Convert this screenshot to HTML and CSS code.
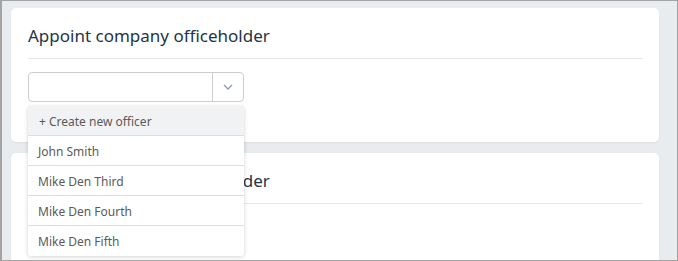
FILE: index.html
```html
<!DOCTYPE html>
<html lang="en">

<head>
    <meta charset="UTF-8">
    <meta name="viewport" content="width=device-width, initial-scale=1.0">
    <title>Appoint company officeholder</title>
    <link rel="stylesheet" href="styles.css">
</head>

<body>

    <div class="page">
        <div class="card">
            <h2 class="card-title">Appoint company officeholder</h2>
            <div class="select-wrap">
                <div class="select">
                    <div class="select-value"></div>
                    <div class="select-arrow">
                        <svg width="10" height="6" viewBox="0 0 10 6">
                            <path d="M1 1 L5 5 L9 1" fill="none" stroke="#8c9aab" stroke-width="1.3" />
                        </svg>
                    </div>
                </div>
                <ul class="menu">
                    <li class="menu-item create">+ Create new officer</li>
                    <li class="menu-item">John Smith</li>
                    <li class="menu-item">Mike Den Third</li>
                    <li class="menu-item">Mike Den Fourth</li>
                    <li class="menu-item">Mike Den Fifth</li>
                </ul>
            </div>
        </div>
        <div class="card">
            <h2 class="card-title">Appoint company officeholder</h2>
        </div>
    </div>

</body>

</html>
```

FILE: styles.css
```css
* {
    margin: 0;
    padding: 0;
    box-sizing: border-box;
}

body {
    font-family: "Noto Sans", "Open Sans", sans-serif;
    width: 678px;
    height: 261px;
    overflow: hidden;
    background: #e9ecef;
    border: 1px solid #a3a3a3;
    border-left-width: 2px;
}

.page {
    display: flex;
    flex-direction: column;
    gap: 11px;
    padding: 7px 0 0 9px;
    width: 657px;
}

.card {
    background: white;
    border-radius: 5px;
    box-shadow: 0 1px 2px rgba(0, 0, 0, 0.06);
    padding: 0 16px 41px 17px;
    height: 134px;
}

.card-title {
    font-weight: normal;
    font-size: 17px;
    color: #243447;
    height: 51px;
    padding-top: 15px;
    line-height: 26px;
    border-bottom: 1px solid #e6e8eb;
}

.select-wrap {
    position: relative;
    margin-top: 13px;
    width: 216px;
}

.select {
    display: flex;
    height: 30px;
    border: 1px solid #cdcdcd;
    border-radius: 4px;
}

.select-value {
    flex: 1;
}

.select-arrow {
    width: 31px;
    border-left: 1px solid #cdcdcd;
    display: flex;
    justify-content: center;
    align-items: center;
}

.menu {
    position: absolute;
    top: 34px;
    left: 0;
    width: 216px;
    list-style: none;
    background: white;
    border-radius: 3px;
    box-shadow: 0 1px 4px rgba(0, 0, 0, 0.18);
}

.menu-item {
    height: 30px;
    padding-top: 2px;
    line-height: 27px;
    padding-left: 10px;
    font-size: 12px;
    color: #5a5a5a;
    border-bottom: 1px solid #dcdee1;
}

.menu-item:last-child {
    border-bottom: none;
}

.create {
    background: #f1f2f4;
    padding-left: 11px;
}
```
